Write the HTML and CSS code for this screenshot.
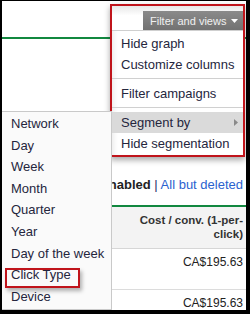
FILE: index.html
```html
<!DOCTYPE html>
<html>
<head>
   <title>Segment by</title>
   <link rel="stylesheet" href="styles.css">
</head>
<body>
   <div class="frame">
       <div class="canvas">
           <div class="chart"></div>

           <div class="filters">
               <span class="current">All enabled</span>
               <span class="pipe">|</span>
               <a href="#" class="link">All but deleted</a>
           </div>

           <table class="grid">
               <thead>
                   <tr>
                       <th class="name"></th>
                       <th class="num">Cost / conv. (1-per-click)</th>
                   </tr>
               </thead>
               <tbody>
                   <tr>
                       <td class="name"></td>
                       <td class="num">CA$195.63</td>
                   </tr>
                   <tr>
                       <td class="name"></td>
                       <td class="num">CA$195.63</td>
                   </tr>
               </tbody>
           </table>

           <!-- menu opened from the button, outlined in red -->
           <div class="menu-mark">
               <div class="menu">
                   <div class="menu-head">
                       <button class="views-btn">Filter and views
                           <svg width="7" height="4" viewBox="0 0 7 4"><path d="M0 0h7L3.5 4z" fill="#fff"/></svg>
                       </button>
                   </div>
                   <ul class="menu-list">
                       <li>Hide graph</li>
                       <li>Customize columns</li>
                       <li class="divider"></li>
                       <li>Filter campaigns</li>
                       <li class="divider"></li>
                       <li class="active">Segment by
                           <svg width="4" height="7" viewBox="0 0 4 7"><path d="M0 0l4 3.5L0 7z" fill="#8a8a8a"/></svg>
                       </li>
                       <li>Hide segmentation</li>
                   </ul>
               </div>
           </div>

           <ul class="submenu">
               <li>Network</li>
               <li>Day</li>
               <li>Week</li>
               <li>Month</li>
               <li>Quarter</li>
               <li>Year</li>
               <li>Day of the week</li>
               <li class="marked">Click Type<span class="mark"></span></li>
               <li>Device</li>
           </ul>
       </div>
   </div>
</body>
</html>
```

FILE: styles.css
```css
body {
    margin: 0;
    background: #000;
    font-family: "Liberation Sans", Arial, sans-serif;
}
.frame {
    width: 250px;
    height: 314px;
    box-sizing: border-box;
    padding: 1px 4px 4px 2px;
}
.canvas {
    position: relative;
    height: 100%;
    background: #fff;
    overflow: hidden;
}
.chart {
    height: 36px;
    border-bottom: 2px solid #11883f;
}
.filters {
    margin-top: 136px;
    padding: 0 3px 10px 0;
    line-height: 20px;
    font-size: 13px;
    text-align: right;
    white-space: nowrap;
    border-bottom: 2px solid #11883f;
}
.current {
    font-weight: bold;
    color: #222;
}
.pipe {
    color: #1f2a6b;
}
.link {
    color: #2a62cf;
    text-decoration: none;
}
.grid {
    width: 100%;
    border-collapse: collapse;
    font-size: 12px;
    color: #222;
}
.grid th {
    background: #f3f3f3;
    font-size: 11.5px;
    font-weight: bold;
    color: #333;
    line-height: 14px;
    padding: 6px 3px 7px;
    vertical-align: top;
    border-bottom: 1px solid #d6d6d6;
}
.grid td {
    line-height: 14px;
    padding: 6px 3px 20px;
    vertical-align: top;
    border-bottom: 1px solid #dcdcdc;
}
.grid .num {
    width: 112px;
    text-align: right;
}
.menu-mark {
    position: absolute;
    left: 108px;
    top: 3px;
    width: 131px;
    border: 2px solid #c0141b;
    box-shadow: 0 3px 6px rgba(0, 0, 0, 0.35);
}
.menu {
    background: #fff;
    box-shadow: inset 5px 0 5px -3px rgba(0, 0, 0, 0.08);
    color: #25263d;
    font-size: 13px;
}
.menu-head {
    height: 24px;
    display: flex;
    justify-content: flex-end;
    align-items: flex-end;
    background: linear-gradient(#e8e8e8, #fff 40%);
    border-bottom: 1px solid #cfcfcf;
}
.views-btn {
    width: 100px;
    height: 19px;
    display: flex;
    align-items: center;
    justify-content: space-between;
    padding: 0 5px 0 7px;
    border: none;
    background: linear-gradient(#8a8a8a, #727272);
    color: #f0f0f0;
    font-family: inherit;
    font-size: 11px;
}
.menu-list {
    list-style: none;
    margin: 0;
    padding: 2px 0 1px;
}
.menu-list li {
    height: 21px;
    line-height: 21px;
    padding: 0 5px 0 9px;
    display: flex;
    justify-content: space-between;
    align-items: center;
    white-space: nowrap;
}
.menu-list li.divider {
    height: 1px;
    margin: 3px 0 4px;
    padding: 0;
    background: #d0d0d0;
}
.menu-list li.active {
    background: #dadada;
}
.submenu {
    position: absolute;
    left: 0;
    top: 110px;
    width: 109px;
    margin: 0;
    padding: 1px 0 2px;
    list-style: none;
    background: #fafafa;
    border: 1px solid #c9c9c9;
    border-left: none;
    color: #25263d;
    font-size: 13px;
}
.submenu li {
    line-height: 21.6px;
    padding-left: 9px;
    white-space: nowrap;
}
.submenu li.marked {
    position: relative;
}
.mark {
    position: absolute;
    left: 3px;
    top: 4px;
    width: 71px;
    height: 16px;
    border: 2px solid #c0141b;
    box-shadow: 2px 3px 4px rgba(0, 0, 0, 0.3);
}
```
